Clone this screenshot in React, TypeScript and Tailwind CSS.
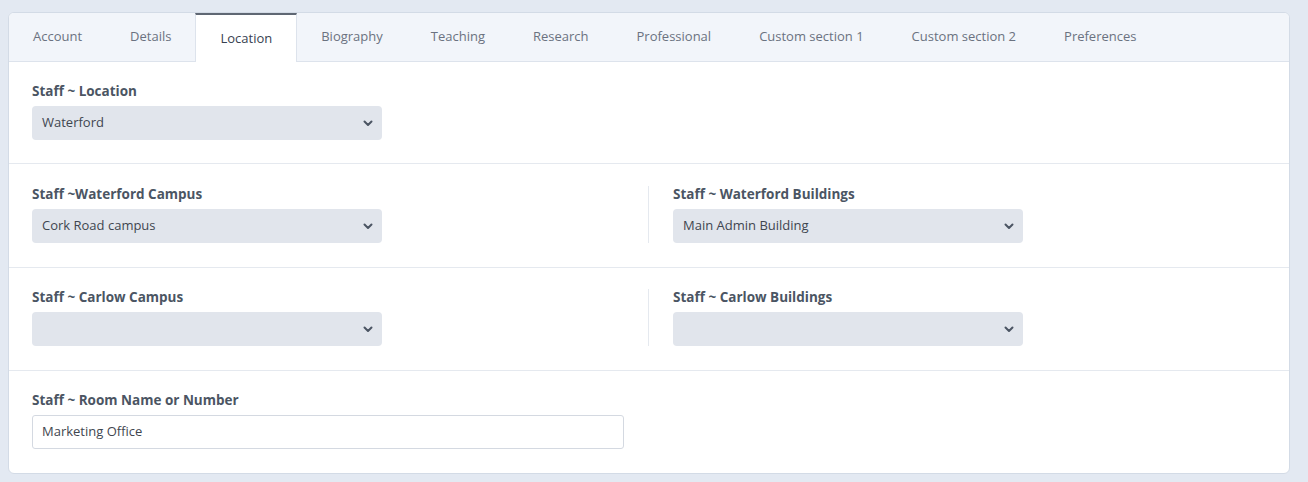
const tabs = [
  'Account',
  'Details',
  'Location',
  'Biography',
  'Teaching',
  'Research',
  'Professional',
  'Custom section 1',
  'Custom section 2',
  'Preferences',
];

function Label({ children }: { children: React.ReactNode }) {
  return <div className="mb-[6px] text-[13.5px] leading-[17px] font-bold text-[#4b5563]">{children}</div>;
}

function Select({ value }: { value?: string }) {
  return (
    <div className="flex h-[34px] w-[350px] items-center justify-between rounded-[4px] bg-[#e1e5ec] pl-[10px] pr-[9px] text-[13px] text-[#3f4650]">
      <span>{value}</span>
      <svg width="10" height="7" viewBox="0 0 10 7" fill="none">
        <path d="M1.5 1.5 5 5 8.5 1.5" stroke="#4b5563" strokeWidth="2" strokeLinecap="round" strokeLinejoin="round" />
      </svg>
    </div>
  );
}

export default function App() {
  return (
    <div className="min-h-screen bg-[#e3e9f2] pl-2 pr-[18px] pt-[12px] pb-2 font-['Open_Sans',sans-serif]">
      <div className="overflow-hidden rounded-[6px] border border-[#d3dbe6] bg-white">
        <div className="flex h-[49px] border-b border-[#dde3ec] bg-[#f2f5fa]">
          {tabs.map((t) => (
            <div
              key={t}
              className={
                t === 'Location'
                  ? 'flex items-center border-t-2 border-x border-[#5f6773] border-x-[#dde3ec] bg-white px-6 text-[13px] text-[#374151] -mb-px'
                  : 'flex items-center px-6 text-[13px] text-[#6b7280]'
              }
            >
              {t}
            </div>
          ))}
        </div>

        <div className="border-b border-[#e5e9ef] px-[23px] pt-[21px] pb-[23px]">
          <Label>Staff ~ Location</Label>
          <Select value="Waterford" />
        </div>

        <div className="grid grid-cols-2 border-b border-[#e5e9ef] pl-[23px] pr-[25px] pt-[22px] pb-[24px]">
          <div>
            <Label>Staff ~Waterford Campus</Label>
            <Select value="Cork Road campus" />
          </div>
          <div className="border-l border-[#e5e9ef] pl-6">
            <Label>Staff ~ Waterford Buildings</Label>
            <Select value="Main Admin Building" />
          </div>
        </div>

        <div className="grid grid-cols-2 border-b border-[#e5e9ef] pl-[23px] pr-[25px] pt-[21px] pb-[24px]">
          <div>
            <Label>Staff ~ Carlow Campus</Label>
            <Select />
          </div>
          <div className="border-l border-[#e5e9ef] pl-6">
            <Label>Staff ~ Carlow Buildings</Label>
            <Select />
          </div>
        </div>

        <div className="grid grid-cols-2 pl-[23px] pr-[25px] pt-[21px] pb-[24px]">
          <div className="pr-6">
            <Label>Staff ~ Room Name or Number</Label>
            <div className="flex h-[34px] items-center rounded-[3px] border border-[#d4d9e1] bg-white px-[9px] text-[13px] text-[#3f4650]">
              Marketing Office
            </div>
          </div>
        </div>
      </div>
    </div>
  );
}
